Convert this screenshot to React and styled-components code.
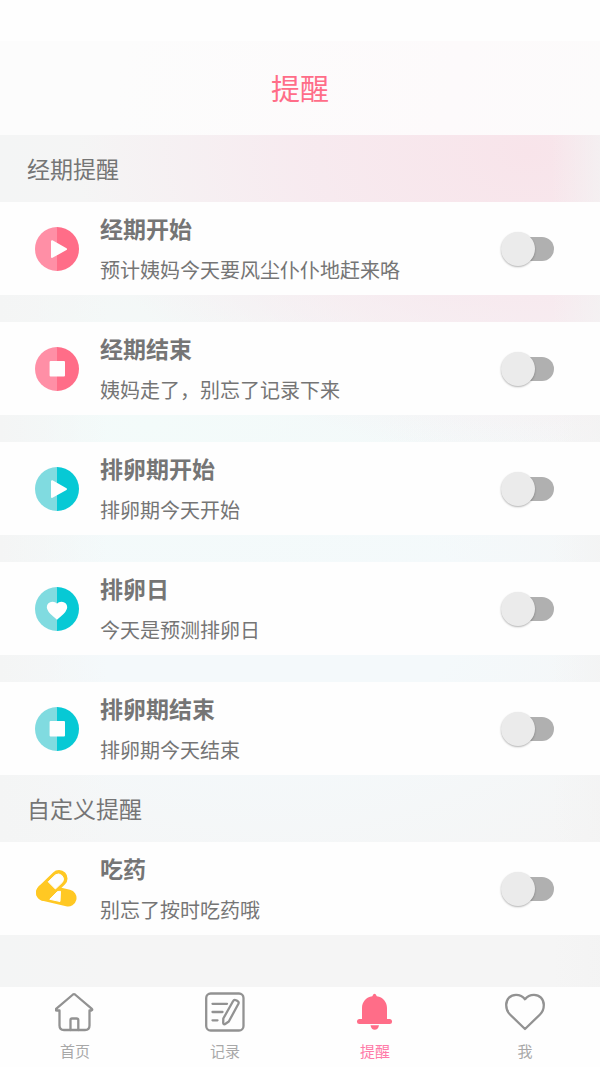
import React from 'react'
import styled, { createGlobalStyle, ThemeProvider } from 'styled-components'

const theme = {
  font: '"Noto Sans CJK SC", sans-serif',
  palette: {
    pink: '#ff6d88',
    pinkLight: '#ff8fa6',
    teal: '#07c9d5',
    tealLight: '#80dbe0',
    yellow: '#ffc823',
    text: '#757575',
    tabIcon: '#929292',
    tabText: '#a8a8a8',
    tabActive: '#ff7aa8'
  }
}

const GlobalStyle = createGlobalStyle`
  * {
    box-sizing: border-box;
  }

  body {
    margin: 0;
    background-color: #fefefe;
    color: ${props => props.theme.palette.text};
    font-family: ${props => props.theme.font};
  }
`

const Page = styled.div`
  display: flex;
  flex-direction: column;
  min-height: 100vh;
  padding-top: 41px;
`

const Header = styled.header`
  display: flex;
  align-items: center;
  justify-content: center;
  height: 94px;
  padding-bottom: 2px;
  background: linear-gradient(100deg, #fcfcfc 20%, #fdfafb 75%, #fcfbfb);
`

const Title = styled.h1`
  margin: 0;
  color: ${props => props.theme.palette.pink};
  font-size: 29px;
  line-height: 40px;
  font-weight: 400;
`

const Main = styled.main`
  flex: 1;
  background:
    linear-gradient(90deg, #f4f5f5, transparent 18%, transparent 92%, rgba(243, 243, 243, 0.7)),
    radial-gradient(75% 36% at 88% 2%, #f8e4ea, rgba(248, 230, 237, 0.7) 50%, transparent),
    radial-gradient(75% 26% at 25% 34%, #f3fbfa, transparent),
    radial-gradient(80% 36% at 45% 56%, #f4f9fb, #f4f9fb 40%, transparent),
    #f5f5f5;
`

const SectionTitle = styled.h2`
  margin: 0;
  padding: 13px 27px 14px;
  font-size: 23px;
  line-height: 40px;
  font-weight: 400;
`

const List = styled.ul`
  display: flex;
  flex-direction: column;
  gap: 27px;
  margin: 0;
  padding: 0;
  list-style: none;
`

const Item = styled.li`
  background-color: #fefefe;
`

const ItemLabel = styled.label`
  display: flex;
  align-items: center;
  gap: 21px;
  padding: 6px 46px 5px 35px;
  cursor: pointer;
`

const ItemIcon = styled.svg`
  flex: none;
  width: 44px;
  height: 44px;
`

const ItemText = styled.div`
  display: flex;
  flex-direction: column;
  flex: 1;
  gap: 2px;
`

const ItemTitle = styled.div`
  font-size: 23px;
  line-height: 40px;
  font-weight: 700;
`

const ItemDescription = styled.div`
  font-size: 20px;
  line-height: 40px;
`

const Toggle = styled.input.attrs({ type: 'checkbox', role: 'switch' })`
  appearance: none;
  display: flex;
  align-items: center;
  flex: none;
  width: 53px;
  height: 34px;
  margin: 0;
  border-radius: 17px;
  cursor: pointer;

  &::before {
    content: "";
    flex: none;
    width: 49px;
    height: 24px;
    margin-left: 4px;
    border-radius: 12px;
    background-color: #b0b0b0;
  }

  &::after {
    content: "";
    flex: none;
    width: 34px;
    height: 34px;
    margin-left: -53px;
    border-radius: 50%;
    background-color: #ebebeb;
    box-shadow: 0 1px 2px rgba(0, 0, 0, 0.3);
  }

  &:checked::before {
    background-color: ${props => props.theme.palette.pinkLight};
  }

  &:checked::after {
    margin-left: -34px;
    background-color: ${props => props.theme.palette.pink};
  }
`

const TabBar = styled.nav`
  display: grid;
  grid-template-columns: repeat(4, 1fr);
  height: 80px;
  background-color: #fefefe;
`

const Tab = styled.a`
  display: flex;
  flex-direction: column;
  align-items: center;
  gap: 9px;
  padding-top: 5px;
  color: ${props => props.$active ? props.theme.palette.tabActive : props.theme.palette.tabText};
  font-size: 15px;
  line-height: 20px;
  text-decoration: none;
`

const TabIcon = styled.svg`
  width: 40px;
  height: 40px;
  fill: none;
  stroke: ${props => props.theme.palette.tabIcon};
  stroke-width: 2.3;
  stroke-linecap: round;
  stroke-linejoin: round;
`

const shapes = {
  play: <path d="M17 14.2V30L31 22.1z" />,
  stop: <rect x="15.6" y="15" width="13.4" height="13.4" />,
  heart: <path d="M22 31.5C19 28.6 12.800 25 12.800 20.300C12.800 17.700 14.800 15.800 17.300 15.800C19.300 15.800 21 16.700 22 18.400C23 16.700 24.700 15.800 26.700 15.800C29.200 15.800 31.200 17.700 31.200 20.300C31.200 25 25 28.600 22 31.500z" />
}

const RoundIcon = ({ shape, left, right }) => (
  <ItemIcon viewBox="0 0 44 44" aria-hidden="true">
    <path d="M22 0a22 22 0 0 0 0 44z" fill={left} />
    <path d="M22 0a22 22 0 0 1 0 44z" fill={right} />
    <g fill="#fefefe" stroke="#fefefe" strokeWidth="2" strokeLinejoin="round">
      {shapes[shape]}
    </g>
  </ItemIcon>
)

const PinkIcon = ({ shape }) => (
  <RoundIcon shape={shape} left={theme.palette.pinkLight} right={theme.palette.pink} />
)

const TealIcon = ({ shape }) => (
  <RoundIcon shape={shape} left={theme.palette.tealLight} right={theme.palette.teal} />
)

const PillIcon = () => (
  <ItemIcon viewBox="0 0 44 44" aria-hidden="true">
    <g stroke={theme.palette.yellow} strokeWidth="17" strokeLinecap="round">
      <path d="M9.5 25.500L24 11.500" />
      <path d="M9.500 25.500L33 31" />
    </g>
    <g fill="#fefefe" stroke="#fefefe" strokeLinejoin="round">
      <path d="M13.200 14.800L20.400 7.900A5.200 5.200 0 0 1 27.600 15.100L20.400 22z" />
      <path d="M22.500 24.500L25.500 24.300L25 34.500L14.800 32.300z" />
    </g>
  </ItemIcon>
)

const HomeIcon = () => (
  <TabIcon viewBox="0 0 40 40" aria-hidden="true">
    <path d="M4.500 18.500H1.500Q0 18 1.400 16.700L18 2.500Q19 1.700 20 2.500L36.600 16.700Q38 18 36.500 18.500H34.500V33.500Q34.500 38 30 38H9Q4.500 38 4.500 33.500z" />
    <path d="M15.500 38V28Q15.500 26.500 17 26.500H21.500Q23.300 26.500 23.300 28V38" />
  </TabIcon>
)

const RecordIcon = () => (
  <TabIcon viewBox="0 0 40 40" aria-hidden="true">
    <rect x="1.200" y="1.500" width="37.300" height="37" rx="4.500" />
    <path d="M7.500 11.800H22M7.500 20H17.500M7.500 28.300H12.500" />
    <path d="M28 9.200Q29 7.300 31 8.200L32.500 9Q34.300 10 33.300 12L23.800 29.500L19.800 32.200Q18.300 32.500 18.200 31L18.300 26.500z" />
  </TabIcon>
)

const BellIcon = () => (
  <TabIcon viewBox="0 0 40 40" aria-hidden="true">
    <g fill={theme.palette.pink} stroke="none">
      <path d="M17.300 4.200Q19.500 -0.600 21.800 4.200C28 5 32 10 32 16V28H7V16C7 10 11 5 17.300 4.200z" />
      <rect x="2" y="27" width="35" height="5" rx="2.500" />
      <path d="M15.500 33.200H24C23.500 36.200 21.800 37.800 19.700 37.800S16 36.200 15.500 33.200z" />
    </g>
  </TabIcon>
)

const HeartIcon = () => (
  <TabIcon viewBox="0 0 40 40" aria-hidden="true">
    <path d="M20 37L5 22.500C2.300 19.800 1.200 16.500 1.200 13C1.200 7 5.500 2.800 11 2.800C15 2.800 18 4.500 20 7.200C22 4.500 25 2.800 29 2.800C34.500 2.800 38.800 7 38.800 13C38.800 16.500 37.700 19.800 35 22.500z" />
  </TabIcon>
)

const periodReminders = [
  { title: '经期开始', description: '预计姨妈今天要风尘仆仆地赶来咯', icon: <PinkIcon shape="play" /> },
  { title: '经期结束', description: '姨妈走了，别忘了记录下来', icon: <PinkIcon shape="stop" /> },
  { title: '排卵期开始', description: '排卵期今天开始', icon: <TealIcon shape="play" /> },
  { title: '排卵日', description: '今天是预测排卵日', icon: <TealIcon shape="heart" /> },
  { title: '排卵期结束', description: '排卵期今天结束', icon: <TealIcon shape="stop" /> }
]

const customReminders = [
  { title: '吃药', description: '别忘了按时吃药哦', icon: <PillIcon /> }
]

const ReminderList = ({ reminders }) => (
  <List>
    {reminders.map(({ title, description, icon }) => (
      <Item key={title}>
        <ItemLabel>
          {icon}
          <ItemText>
            <ItemTitle>{title}</ItemTitle>
            <ItemDescription>{description}</ItemDescription>
          </ItemText>
          <Toggle />
        </ItemLabel>
      </Item>
    ))}
  </List>
)

const App = () => (
  <ThemeProvider theme={theme}>
    <GlobalStyle />
    <Page>
      <Header>
        <Title>提醒</Title>
      </Header>
      <Main>
        <SectionTitle>经期提醒</SectionTitle>
        <ReminderList reminders={periodReminders} />
        <SectionTitle>自定义提醒</SectionTitle>
        <ReminderList reminders={customReminders} />
      </Main>
      <TabBar>
        <Tab href="#home"><HomeIcon />首页</Tab>
        <Tab href="#record"><RecordIcon />记录</Tab>
        <Tab href="#reminders" $active aria-current="page"><BellIcon />提醒</Tab>
        <Tab href="#me"><HeartIcon />我</Tab>
      </TabBar>
    </Page>
  </ThemeProvider>
)

export default App
